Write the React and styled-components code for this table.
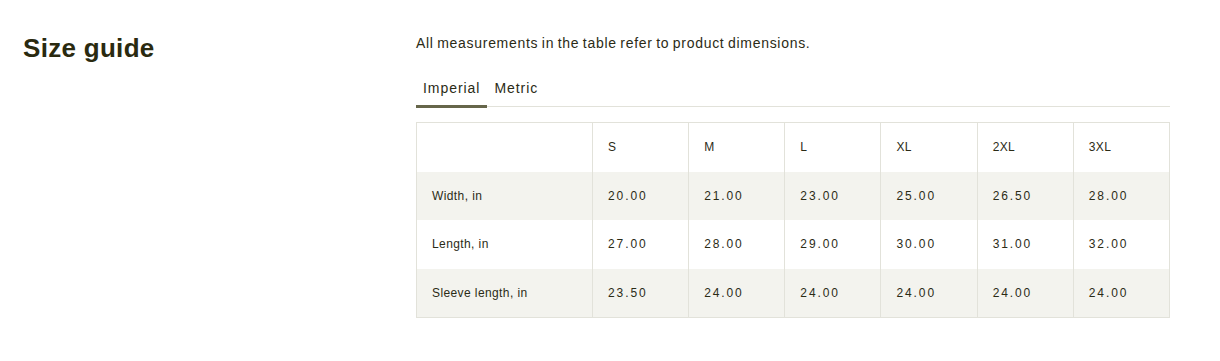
import React, { useState } from 'react';
import styled, { createGlobalStyle } from 'styled-components';

const ink = '#2b2b16';
const line = '#e2e2da';
const shade = '#f3f3ee';

const GlobalStyle = createGlobalStyle`
  body {
    margin: 0;
    background: #ffffff;
    font-family: "Liberation Sans", Arial, sans-serif;
    color: ${ink};
  }
`

const Page = styled.section`
  display: grid;
  grid-template-columns: 393px 754px;
  padding: 33px 0 0 23px;
`

const Titulo = styled.h2`
  margin: 0;
  font-size: 26px;
  font-weight: 700;
  color: #2a2a10;
  letter-spacing: 0.3px;
`

const Conteudo = styled.div`
  display: flex;
  flex-direction: column;
`

const Nota = styled.p`
  margin: 2px 0 0;
  font-size: 14px;
  line-height: 16px;
  letter-spacing: 0.7px;
  word-spacing: -1px;
  color: ${ink};
`

const Abas = styled.div`
  display: flex;
  margin-top: 26px;
  border-bottom: 1px solid ${line};
`

const Aba = styled.button`
  background: transparent;
  border: none;
  border-bottom: 3px solid ${p => (p.$ativa ? '#66664a' : 'transparent')};
  margin-bottom: -2px;
  padding: 3px 7px 9px;
  font-family: inherit;
  font-size: 14px;
  letter-spacing: 0.95px;
  color: ${ink};
  cursor: pointer;
`

const Tabela = styled.table`
  margin-top: 15px;
  width: 754px;
  border-collapse: collapse;
  border: 1px solid ${line};
  table-layout: fixed;
  font-size: 12px;
  letter-spacing: 0.3px;

  tr:nth-child(even) td {
    background: ${shade};
  }
`

const Celula = styled.td`
  height: 48.5px;
  padding: 0 0 0 15px;
  border-left: ${p => (p.$primeira ? 'none' : `1px solid ${line}`)};
  text-align: left;
  font-weight: 400;
  letter-spacing: ${p => (p.$numero ? '1.9px' : '0.4px')};
  width: ${p => (p.$primeira ? '160px' : 'auto')};
`

const tamanhos = ['S', 'M', 'L', 'XL', '2XL', '3XL'];
const linhas = [
  ['Width, in', ['20.00', '21.00', '23.00', '25.00', '26.50', '28.00']],
  ['Length, in', ['27.00', '28.00', '29.00', '30.00', '31.00', '32.00']],
  ['Sleeve length, in', ['23.50', '24.00', '24.00', '24.00', '24.00', '24.00']],
];

function App() {
  const [aba, setAba] = useState('Imperial');

  return (
    <>
      <GlobalStyle />
      <Page>
        <Titulo>Size guide</Titulo>
        <Conteudo>
          <Nota>All measurements in the table refer to product dimensions.</Nota>
          <Abas>
            {['Imperial', 'Metric'].map(a => (
              <Aba key={a} $ativa={aba === a} onClick={() => setAba(a)}>{a}</Aba>
            ))}
          </Abas>
          <Tabela>
            <tbody>
              <tr>
                <Celula $primeira />
                {tamanhos.map(t => <Celula key={t}>{t}</Celula>)}
              </tr>
              {linhas.map(([nome, valores]) => (
                <tr key={nome}>
                  <Celula $primeira>{nome}</Celula>
                  {valores.map((v, i) => <Celula key={i} $numero>{v}</Celula>)}
                </tr>
              ))}
            </tbody>
          </Tabela>
        </Conteudo>
      </Page>
    </>
  )
}

export default App
